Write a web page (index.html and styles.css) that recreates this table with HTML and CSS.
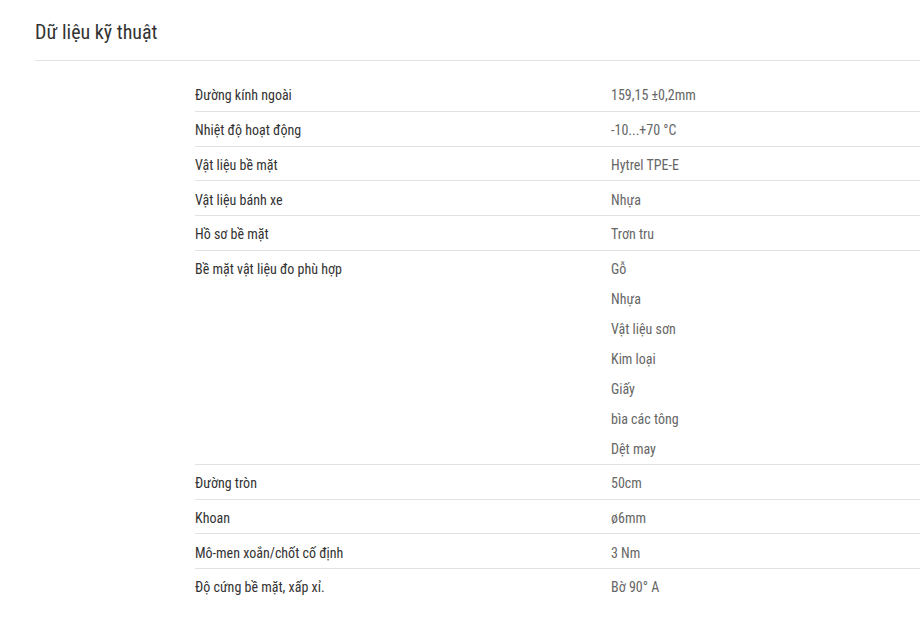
FILE: index.html
```html
<!DOCTYPE html>
<html lang="vi">
<head>
<meta charset="utf-8">
<title>Dữ liệu kỹ thuật</title>
<link rel="stylesheet" href="styles.css">
</head>
<body>
<section class="specs">
  <h2 class="specs-title">Dữ liệu kỹ thuật</h2>
  <div class="specs-table">
    <div class="row"><div class="label">Đường kính ngoài</div><div class="value">159,15 ±0,2mm</div></div>
    <div class="row"><div class="label">Nhiệt độ hoạt động</div><div class="value">-10...+70 °C</div></div>
    <div class="row"><div class="label">Vật liệu bề mặt</div><div class="value">Hytrel TPE-E</div></div>
    <div class="row"><div class="label">Vật liệu bánh xe</div><div class="value">Nhựa</div></div>
    <div class="row"><div class="label">Hồ sơ bề mặt</div><div class="value">Trơn tru</div></div>
    <div class="row multi"><div class="label">Bề mặt vật liệu đo phù hợp</div><div class="value">
      <div>Gỗ</div><div>Nhựa</div><div>Vật liệu sơn</div><div>Kim loại</div><div>Giấy</div><div>bìa các tông</div><div>Dệt may</div>
    </div></div>
    <div class="row"><div class="label">Đường tròn</div><div class="value">50cm</div></div>
    <div class="row"><div class="label">Khoan</div><div class="value">ø6mm</div></div>
    <div class="row"><div class="label">Mô-men xoắn/chốt cố định</div><div class="value">3 Nm</div></div>
    <div class="row last"><div class="label">Độ cứng bề mặt, xấp xỉ.</div><div class="value">Bờ 90° A</div></div>
  </div>
</section>
</body>
</html>
```
FILE: styles.css
```css
html, body {
  margin: 0;
  padding: 0;
  background: #fff;
}
body {
  font-family: Roboto, "Liberation Sans", sans-serif;
  font-stretch: condensed;
  color: #333;
}
.specs {
  padding: 18px 0 0 35px;
}
.specs-title {
  margin: 0;
  font-size: 20px;
  font-weight: 400;
  line-height: 28px;
  color: #333;
  padding-bottom: 14px;
  border-bottom: 1px solid #e2e2e2;
}
.specs-table {
  margin: 16px 0 0 160px;
}
.row {
  display: grid;
  grid-template-columns: 416px 1fr;
  padding: 3.2px 0 0.6px;
  border-bottom: 1px solid #e2e2e2;
  font-size: 14px;
  line-height: 30px;
}
.row.multi {
  padding: 3px 0 0;
}
.row.last {
  border-bottom: none;
}
.label {
  color: #333;
}
.value {
  color: #666;
}
```
